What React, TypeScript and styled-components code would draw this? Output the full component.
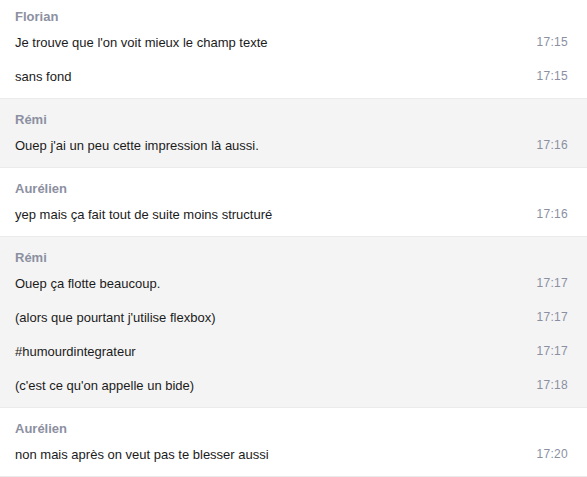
import React from 'react';
import styled, { createGlobalStyle } from 'styled-components';

type Message = { text: string; time: string };
type Group = { author: string; messages: Message[] };

const groups: Group[] = [
  {
    author: 'Florian',
    messages: [
      { text: "Je trouve que l'on voit mieux le champ texte", time: '17:15' },
      { text: 'sans fond', time: '17:15' },
    ],
  },
  {
    author: 'Rémi',
    messages: [{ text: "Ouep j'ai un peu cette impression là aussi.", time: '17:16' }],
  },
  {
    author: 'Aurélien',
    messages: [{ text: 'yep mais ça fait tout de suite moins structuré', time: '17:16' }],
  },
  {
    author: 'Rémi',
    messages: [
      { text: 'Ouep ça flotte beaucoup.', time: '17:17' },
      { text: "(alors que pourtant j'utilise flexbox)", time: '17:17' },
      { text: '#humourdintegrateur', time: '17:17' },
      { text: "(c'est ce qu'on appelle un bide)", time: '17:18' },
    ],
  },
  {
    author: 'Aurélien',
    messages: [{ text: 'non mais après on veut pas te blesser aussi', time: '17:20' }],
  },
];

function App() {
  return (
    <>
      <GlobalStyle />
      <Viewport>
        <Thread>
          {groups.map((group, i) => (
            <GroupBlock key={i} $shaded={i % 2 === 1}>
              <Author>{group.author}</Author>
              {group.messages.map((m, j) => (
                <MessageRow key={j}>
                  <MessageText>{m.text}</MessageText>
                  <Time>{m.time}</Time>
                </MessageRow>
              ))}
            </GroupBlock>
          ))}
        </Thread>
      </Viewport>
    </>
  );
}

export default App;

const GlobalStyle = createGlobalStyle`
  html, body {
    margin: 0;
    padding: 0;
    background: #ffffff;
  }
  body {
    font-family: "Liberation Sans", Arial, sans-serif;
    -webkit-font-smoothing: antialiased;
  }
`;

const Viewport = styled.div`
  width: 587px;
  height: 477px;
  overflow: hidden;
  background: #ffffff;
`;

// the thread is scrolled a few pixels, so the first group is cut at the top
const Thread = styled.div`
  display: flex;
  flex-direction: column;
  margin-top: -4px;
`;

const GroupBlock = styled.div<{ $shaded: boolean }>`
  display: flex;
  flex-direction: column;
  padding: 13px 0 5px;
  background: ${(p) => (p.$shaded ? '#f4f4f4' : '#ffffff')};
  border-bottom: 1px solid #ebebeb;
`;

const Author = styled.div`
  padding: 0 15px;
  height: 16px;
  line-height: 16px;
  font-size: 13px;
  font-weight: bold;
  color: #8c90a1;
`;

const MessageRow = styled.div`
  display: flex;
  align-items: center;
  justify-content: space-between;
  height: 34px;
  padding: 0 19px 0 15px;
`;

const MessageText = styled.span`
  font-size: 13px;
  color: #1b1b1b;
`;

const Time = styled.span`
  font-size: 12px;
  color: #8a8fa2;
  letter-spacing: 0.3px;
`;
